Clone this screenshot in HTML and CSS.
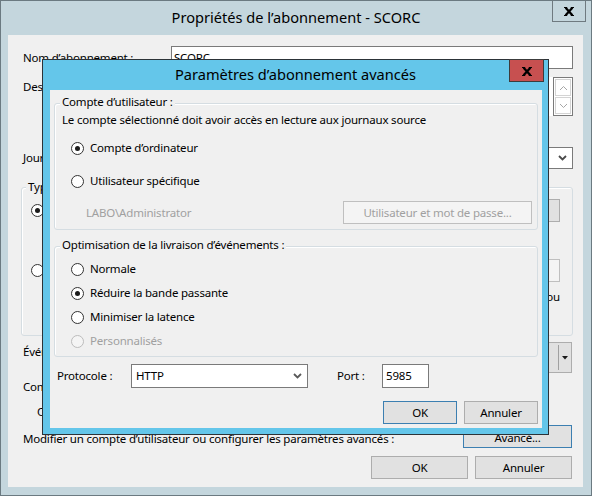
FILE: index.html
```html
<!DOCTYPE html>
<html lang="fr">
<head>
<meta charset="utf-8">
<title>Propriétés de l’abonnement - SCORC</title>
<link rel="stylesheet" href="styles.css">
</head>
<body>
<div class="win">
  <div class="win-title">Propriétés de l’abonnement - SCORC
    <div class="cap-close outer-close">
      <svg width="10" height="9" viewBox="0 0 10 9"><path d="M1.6 0.8 L8.4 8.2 M8.4 0.8 L1.6 8.2" stroke="#000" stroke-width="2.3" fill="none"/><path d="M0 0.5 H3.2 M6.8 0.5 H10 M0 8.5 H3.2 M6.8 8.5 H10" stroke="#000" stroke-width="1" fill="none"/></svg>
    </div>
  </div>
  <div class="win-client">
    <div class="frow r-nom">
      <span class="lbl">Nom d’abonnement :</span>
      <div class="tb">SCORC</div>
    </div>
    <div class="frow r-desc">
      <span class="lbl lbl-top">Description :</span>
      <div class="desc">
        <div class="desc-text"></div>
        <div class="vscroll">
          <div class="sbtn"><svg width="9" height="6" viewBox="0 0 9 6"><path d="M1 5 L4.5 1.5 L8 5" fill="none" stroke="#a6a6a6" stroke-width="1"/></svg></div>
          <div class="sbtn"><svg width="9" height="6" viewBox="0 0 9 6"><path d="M1 1 L4.5 4.5 L8 1" fill="none" stroke="#a6a6a6" stroke-width="1"/></svg></div>
        </div>
      </div>
    </div>
    <div class="frow r-journal">
      <span class="lbl">Journal de destination :</span>
      <div class="combo"><span></span><svg width="9" height="6" viewBox="0 0 9 6"><path d="M1 1 L4.5 4.5 L8 1" fill="none" stroke="#4a4a4a" stroke-width="1.8"/></svg></div>
    </div>
    <div class="grp outer-grp">
      <div class="grp-legend">Type d’abonnement</div>
      <div class="og-row og-row1">
        <span class="radio checked"></span>
        <div class="btn og-btn">...</div>
      </div>
      <div class="og-row og-row2">
        <span class="radio"></span>
        <div class="btn disabled og-btn">...</div>
      </div>
      <div class="og-hint">Configurez la stratégie de groupe ou</div>
    </div>
    <div class="frow r-evt">
      <span class="lbl lbl-top">Événements à collecter :</span>
      <div class="split"><span class="split-text"></span><span class="split-sep"></span><span class="split-arrow"><svg width="6" height="4" viewBox="0 0 6 4"><path d="M0 0 H6 L3 3.5 Z" fill="#1a1a1a"/></svg></span></div>
    </div>
    <div class="line l-compte">Compte d’utilisateur :</div>
    <div class="line l-indent">Compte d’ordinateur</div>
    <div class="adv-row">
      <span class="adv-text">Modifier un compte d’utilisateur ou configurer les paramètres avancés :</span>
      <div class="btn default adv-btn"><span class="adv-btn-text">Avancé...</span></div>
    </div>
    <div class="footer">
      <div class="btn foot-btn">OK</div>
      <div class="btn foot-btn">Annuler</div>
    </div>
  </div>

  <div class="dlg">
    <div class="dlg-title">Paramètres d’abonnement avancés
      <div class="cap-close red-close">
        <svg width="10" height="9" viewBox="0 0 10 9"><path d="M1.6 0.8 L8.4 8.2 M8.4 0.8 L1.6 8.2" stroke="#000" stroke-width="2.3" fill="none"/><path d="M0 0.5 H3.2 M6.8 0.5 H10 M0 8.5 H3.2 M6.8 8.5 H10" stroke="#000" stroke-width="1" fill="none"/></svg>
      </div>
    </div>
    <div class="dlg-client">
      <div class="grp g1">
        <div class="grp-legend">Compte d’utilisateur :</div>
        <div class="g1-desc">Le compte sélectionné doit avoir accès en lecture aux journaux source</div>
        <div class="opt-row r1"><span class="radio checked"></span>Compte d’ordinateur</div>
        <div class="opt-row r2"><span class="radio"></span>Utilisateur spécifique</div>
        <div class="cred-row">
          <span class="muted">LABO\Administrator</span>
          <div class="btn disabled cred-btn">Utilisateur et mot de passe...</div>
        </div>
      </div>
      <div class="grp g2">
        <div class="grp-legend">Optimisation de la livraison d’événements :</div>
        <div class="opts">
          <div class="opt-row"><span class="radio"></span>Normale</div>
          <div class="opt-row"><span class="radio checked"></span>Réduire la bande passante</div>
          <div class="opt-row"><span class="radio"></span>Minimiser la latence</div>
          <div class="opt-row muted"><span class="radio disabled"></span>Personnalisés</div>
        </div>
      </div>
      <div class="proto-row">
        <span class="proto-lbl">Protocole :</span>
        <div class="select"><span>HTTP</span><svg width="9" height="6" viewBox="0 0 9 6"><path d="M1 1 L4.5 4.5 L8 1" fill="none" stroke="#5a5a5a" stroke-width="1.8"/></svg></div>
        <span class="port-lbl">Port :</span>
        <div class="port">5985</div>
      </div>
      <div class="dlg-footer">
        <div class="btn default dlg-btn">OK</div>
        <div class="btn dlg-btn">Annuler</div>
      </div>
    </div>
  </div>
</div>
</body>
</html>
```
FILE: styles.css
```css
* { box-sizing: border-box; }

body {
  margin: 0;
  font-family: "Noto Sans", "Open Sans", sans-serif;
  font-size: 11.5px;
  letter-spacing: -0.2px;
  line-height: 16px;
  color: #000;
}

/* ---------- outer window ---------- */
.win {
  position: relative;
  width: 592px;
  height: 496px;
  border: 1px solid #6b7a81;
  background: #c4d6dd;
  display: flex;
  flex-direction: column;
  overflow: hidden;
}

.win-title {
  position: relative;
  flex: none;
  height: 34px;
  display: flex;
  align-items: center;
  justify-content: center;
  padding-bottom: 3px;
  font-size: 14.6px;
  letter-spacing: 0;
  white-space: nowrap;
}

.cap-close {
  position: absolute;
  top: -1px;
  display: flex;
  align-items: center;
  justify-content: center;
  border: 1px solid #6f7a80;
}

.outer-close {
  right: 5px;
  width: 34px;
  height: 22px;
  padding-top: 1px;
}

.win-client {
  flex: 1;
  margin: 0 8px 8px 7px;
  background: #f0f0f0;
  padding: 0 10px 0 15px;
  display: flex;
  flex-direction: column;
  white-space: nowrap;
}

.frow {
  display: grid;
  grid-template-columns: 148px 1fr;
  align-items: center;
}

.lbl-top { align-self: start; padding-top: 2px; }

.r-nom { margin-top: 11px; height: 23px; }
.r-desc { margin-top: 8px; height: 39px; }
.r-journal { margin-top: 31px; height: 22px; }
.r-evt { margin-top: 6px; height: 31px; }

.tb {
  height: 23px;
  border: 1px solid #7a7a7a;
  background: #fff;
  padding: 0 2px;
  display: flex;
  align-items: center;
}

.desc {
  height: 39px;
  display: flex;
}
.desc-text { flex: 1; background: #fff; }
.vscroll {
  width: 20px;
  border: 1px solid #7a7a7a;
  background: #fff;
  padding: 1px;
  display: flex;
  flex-direction: column;
  gap: 1px;
}
.sbtn {
  flex: 1;
  border: 1px solid #d4d4d4;
  display: flex;
  align-items: center;
  justify-content: center;
}

.combo {
  height: 22px;
  border: 1px solid #7a7a7a;
  background: #fff;
  padding: 0 5px 0 3px;
  display: flex;
  align-items: center;
  justify-content: space-between;
}

.split {
  height: 31px;
  border: 1px solid #adadad;
  background: #e1e1e1;
  display: flex;
  align-items: center;
  margin-right: 1px;
}
.split-text { flex: 1; }
.split-sep { width: 1px; height: 25px; background: #a0a0a0; }
.split-arrow { width: 12px; display: flex; justify-content: center; }

/* group boxes */
.grp {
  border: 1px solid #d5dde2;
  border-radius: 3px;
  box-shadow: inset 1px 1px 0 #fff;
  display: flex;
  flex-direction: column;
}
.grp-legend {
  align-self: flex-start;
  background: #f0f0f0;
  padding: 0 2px;
  margin: -10px 0 0 5px;
}

.outer-grp {
  margin: 18px 0 0 -2px;
  height: 149px;
  padding: 0 12px 0 9px;
}
.outer-grp .grp-legend { margin: -9px 0 0 -5px; }

.og-row {
  height: 24px;
  display: flex;
  align-items: center;
  justify-content: space-between;
}
.og-row1 { margin-top: 3px; }
.og-row2 { margin-top: 36px; }
.og-hint { margin-top: 7px; text-align: right; }
.og-btn { width: 180px; height: 24px; padding: 0 2px; justify-content: flex-end; }
.og-row2 .og-btn { height: 23px; }

.line { padding-left: 0; }
.l-compte { margin-top: 6px; }
.l-indent { margin-top: 9px; padding-left: 14px; }

.adv-row {
  margin-top: 4px;
  height: 24px;
  display: flex;
  align-items: center;
  justify-content: space-between;
}
.adv-text { padding-top: 5px; }
.adv-btn { width: 109px; height: 24px; margin-right: 1px; }
.adv-btn-text { padding-top: 4px; }

.footer {
  margin-top: 8px;
  display: flex;
  justify-content: flex-end;
  gap: 7px;
  padding-right: 1px;
}
.foot-btn { width: 97px; }

/* buttons */
.btn {
  height: 23px;
  border: 1px solid #adadad;
  background: #e1e1e1;
  display: flex;
  align-items: center;
  justify-content: center;
  white-space: nowrap;
}
.btn.default { border-color: #3c7fb1; }
.btn.disabled {
  background: #f4f4f4;
  border-color: #bfbfbf;
  color: #a0a0a0;
}

/* radios */
.radio {
  flex: none;
  width: 13px;
  height: 13px;
  border-radius: 50%;
  border: 1px solid #333;
  background: #fff;
  display: flex;
  align-items: center;
  justify-content: center;
}
.radio.checked::after {
  content: "";
  width: 5px;
  height: 5px;
  border-radius: 50%;
  background: #1b1b1b;
}
.radio.disabled {
  border-color: #bcbcbc;
  background: #f4f4f4;
}

.muted { color: #a0a0a0; }

/* ---------- modal dialog ---------- */
.dlg {
  position: absolute;
  left: 41px;
  top: 58px;
  width: 507px;
  height: 376px;
  border: 1px solid #2c3338;
  background: #64c6ea;
  display: flex;
  flex-direction: column;
  white-space: nowrap;
}

.dlg-title {
  position: relative;
  flex: none;
  height: 30px;
  display: flex;
  align-items: center;
  justify-content: center;
  padding-bottom: 2px;
  font-size: 14.6px;
  letter-spacing: 0;
}

.red-close {
  right: 4px;
  width: 35px;
  height: 23px;
  background: #c75050;
  border-color: #3c3c3c;
  padding-top: 1px;
}

.dlg-client {
  flex: 1;
  margin: 0 6px 6px 7px;
  background: #f0f0f0;
  padding: 0 4px;
  display: flex;
  flex-direction: column;
}

.g1 { margin-top: 13px; height: 127px; }
.g1-desc { margin-top: 2px; padding-left: 7px; }

.opt-row {
  display: flex;
  align-items: center;
  gap: 6px;
  padding-left: 16px;
  height: 16px;
}
.g1 .r1 { margin-top: 12px; }
.g1 .r2 { margin-top: 17px; }

.cred-row {
  margin-top: 12px;
  height: 23px;
  display: flex;
  align-items: center;
  justify-content: space-between;
  padding: 0 5px 0 31px;
}
.cred-btn { width: 189px; }

.g2 { margin-top: 16px; height: 111px; }
.opts { margin-top: 4px; display: flex; flex-direction: column; }
.opts .opt-row { height: 24px; }

.proto-row {
  margin-top: 7px;
  height: 24px;
  display: flex;
  align-items: center;
  padding-left: 3px;
}
.proto-lbl { width: 74px; }
.select {
  width: 177px;
  height: 24px;
  border: 1px solid #7a7a7a;
  background: #fff;
  padding: 0 5px 0 4px;
  display: flex;
  align-items: center;
  justify-content: space-between;
}
.port-lbl { margin-left: 29px; width: 45px; }
.port {
  width: 47px;
  height: 24px;
  border: 1px solid #7a7a7a;
  background: #fff;
  padding: 0 3px;
  display: flex;
  align-items: center;
}

.dlg-footer {
  margin-top: 13px;
  display: flex;
  justify-content: flex-end;
  gap: 7px;
}
.dlg-btn { width: 74px; }
```
